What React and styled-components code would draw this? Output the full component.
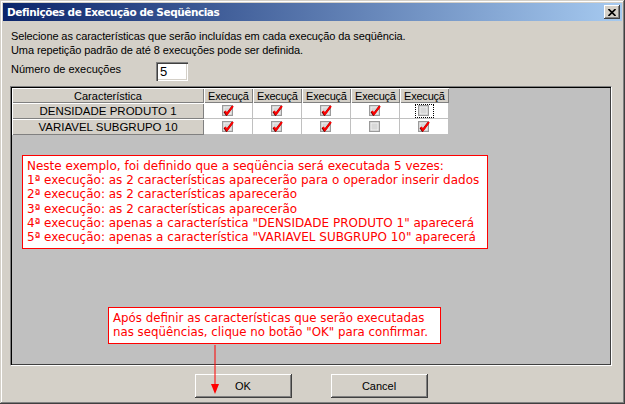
import styled, { createGlobalStyle } from 'styled-components'

const GlobalStyle = createGlobalStyle`
  html, body {
    margin: 0;
    padding: 0;
    background: #d4d0c8;
  }
  body {
    font-family: "Liberation Sans", Arial, sans-serif;
    font-size: 11px;
    color: #000;
  }
`

const Window = styled.div`
  position: relative;
  width: 625px;
  height: 404px;
  box-sizing: border-box;
  padding: 3px;
  display: flex;
  flex-direction: column;
  background: #d4d0c8;
  box-shadow: inset -1px -1px #404040, inset 1px 1px #d4d0c8, inset -2px -2px #808080, inset 2px 2px #fff;
`

const TitleBar = styled.div`
  height: 18px;
  display: flex;
  align-items: center;
  justify-content: space-between;
  padding: 0 2px 0 4px;
  background: linear-gradient(to right, #0a246a, #a6caf0);
`

const Title = styled.span`
  color: #fff;
  font-family: "DejaVu Sans", sans-serif;
  font-weight: bold;
  font-size: 10.5px;
  letter-spacing: -0.45px;
`

const CloseButton = styled.div`
  width: 16px;
  height: 14px;
  box-sizing: border-box;
  background: #d4d0c8;
  display: flex;
  align-items: center;
  justify-content: center;
  box-shadow: inset -1px -1px #404040, inset 1px 1px #fff, inset -2px -2px #808080;
`

const Body = styled.div`
  flex: 1;
  display: flex;
  flex-direction: column;
  padding: 8px 10px 0 7px;
`

const Intro = styled.p`
  margin: 0;
  padding-left: 1px;
  line-height: 14px;
  letter-spacing: -0.1px;
`

const NumberRow = styled.div`
  display: flex;
  margin-top: 5px;
  height: 19px;
`

const NumberLabel = styled.span`
  width: 145px;
  padding-left: 1px;
  line-height: 14px;
`

const NumberInput = styled.div`
  width: 32px;
  height: 19px;
  box-sizing: border-box;
  padding: 3px 0 0 4px;
  background: #fff;
  font-size: 13px;
  line-height: 14px;
  box-shadow: inset 1px 1px #808080, inset 2px 2px #404040, inset -1px -1px #fff, inset -2px -2px #d4d0c8;
`

const GridArea = styled.div`
  margin-top: 5px;
  height: 280px;
  box-sizing: border-box;
  background: #c0c0c0;
  border: 1px solid;
  border-color: #808080 #fff #fff #808080;
  box-shadow: inset 1px 1px #000, inset -1px -1px #404040;
  padding: 1px 0 0 1px;
`

const Table = styled.div`
  display: grid;
  grid-template-columns: 192px repeat(5, 49px);
  grid-template-rows: 15px 16px 16px;
`

const HeadCell = styled.div`
  background: #d4d0c8;
  box-shadow: inset 1px 1px #fff, inset -1px -1px #808080;
  display: flex;
  align-items: center;
  justify-content: ${p => (p.$left ? 'flex-start' : 'center')};
  padding-left: ${p => (p.$left ? '4px' : '0')};
  overflow: hidden;
  white-space: nowrap;
  font-size: ${p => (p.$caps ? '11.5px' : '11px')};
  letter-spacing: ${p => (p.$left ? '-0.2px' : '0')};
`

const DataCell = styled.div`
  background: #fff;
  border-right: 1px solid #c0c0c0;
  border-bottom: 1px solid #c0c0c0;
  display: flex;
  align-items: center;
  justify-content: center;
`

const Focus = styled.div`
  width: 19px;
  height: 14px;
  box-sizing: border-box;
  outline: 1px dotted #000;
  outline-offset: -1px;
  display: flex;
  align-items: center;
  justify-content: center;
`

const Buttons = styled.div`
  margin-top: 8px;
  display: flex;
  justify-content: center;
  gap: 39px;
`

const Button = styled.div`
  width: 97px;
  height: 24px;
  background: #d4d0c8;
  display: flex;
  align-items: center;
  justify-content: center;
  box-shadow: inset -1px -1px #404040, inset 1px 1px #fff, inset -2px -2px #808080;
`

const Callout = styled.div`
  position: absolute;
  left: ${p => p.$left}px;
  top: ${p => p.$top}px;
  width: ${p => p.$width}px;
  box-sizing: border-box;
  padding: 3px 4px 4px 4px;
  background: #fff;
  border: 1px solid #ff0000;
  color: #ff0000;
  font-family: "DejaVu Sans", sans-serif;
  font-size: ${p => p.$size}px;
  line-height: 14.2px;
  white-space: nowrap;
`

const Arrow = styled.svg`
  position: absolute;
  left: 210px;
  top: 345px;
`

const Check = ({ on }) => (
  <svg width="12" height="11" viewBox="0 0 12 11">
    <rect x="0.5" y="0.5" width="10" height="10" fill="#c8c8c8" stroke="#9a9a9a" />
    <rect x="2" y="2" width="7" height="7" fill="#d8d8d8" stroke="#fff" strokeWidth="0.6" />
    {on && (
      <>
        <path d="M3 6 L5 9 L11 1" fill="none" stroke="#600000" strokeWidth="2" transform="translate(-0.6 0.6)" />
        <path d="M3 6 L5 9 L11 1" fill="none" stroke="#ff0000" strokeWidth="2" />
      </>
    )}
  </svg>
)

const rows = [
  { name: 'DENSIDADE PRODUTO 1', marks: [1, 1, 1, 1, 0] },
  { name: 'VARIAVEL SUBGRUPO 10', marks: [1, 1, 1, 0, 1] },
]

export default function App() {
  return (
    <>
      <GlobalStyle />
      <Window>
        <TitleBar>
          <Title>Definições de Execução de Seqüências</Title>
          <CloseButton>
            <svg width="8" height="7" viewBox="0 0 8 7">
              <path d="M0.5 0 L7.5 7 M7.5 0 L0.5 7" stroke="#000" strokeWidth="1.6" />
            </svg>
          </CloseButton>
        </TitleBar>
        <Body>
          <Intro>
            Selecione as características que serão incluídas em cada execução da seqüência.
            <br />
            Uma repetição padrão de até 8 execuções pode ser definida.
          </Intro>
          <NumberRow>
            <NumberLabel>Número de execuções</NumberLabel>
            <NumberInput>5</NumberInput>
          </NumberRow>
          <GridArea>
            <Table>
              <HeadCell>Característica</HeadCell>
              {[0, 1, 2, 3, 4].map(i => (
                <HeadCell key={i} $left>Execuçã</HeadCell>
              ))}
              {rows.map((r, ri) => (
                <>
                  <HeadCell key={r.name} $caps>{r.name}</HeadCell>
                  {r.marks.map((m, ci) => (
                    <DataCell key={ri + '-' + ci}>
                      {ri === 0 && ci === 4 ? (
                        <Focus><Check on={m} /></Focus>
                      ) : (
                        <Check on={m} />
                      )}
                    </DataCell>
                  ))}
                </>
              ))}
            </Table>
          </GridArea>
          <Buttons>
            <Button>OK</Button>
            <Button>Cancel</Button>
          </Buttons>
        </Body>

        <Callout $left={22} $top={155} $width={466} $size={12}>
          Neste exemplo, foi definido que a seqüência será executada 5 vezes:<br />
          1ª execução: as 2 características aparecerão para o operador inserir dados<br />
          2ª execução: as 2 características aparecerão<br />
          3ª execução: as 2 características aparecerão<br />
          4ª execução: apenas a característica "DENSIDADE PRODUTO 1" aparecerá<br />
          5ª execução: apenas a característica "VARIAVEL SUBGRUPO 10" aparecerá
        </Callout>

        <Callout $left={108} $top={307} $width={333} $size={11.8}>
          Após definir as características que serão executadas<br />
          nas seqüências, clique no botão "OK" para confirmar.
        </Callout>

        <Arrow width="10" height="50" viewBox="0 0 10 50">
          <line x1="5" y1="0" x2="5" y2="40" stroke="#ff0000" strokeWidth="1" />
          <polygon points="1,39 9,39 5,49" fill="#ff0000" />
        </Arrow>
      </Window>
    </>
  )
}
